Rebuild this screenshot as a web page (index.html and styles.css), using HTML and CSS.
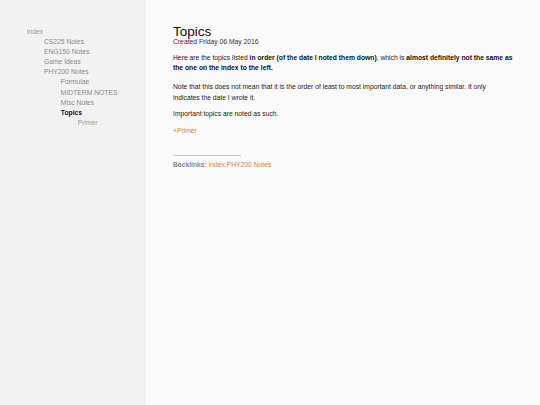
FILE: index.html
```html
<!DOCTYPE html>
<html>
<head>
<meta charset="utf-8">
<title>Topics</title>
<link rel="stylesheet" href="styles.css">
</head>
<body>
<div class="page">
  <nav class="sidebar">
    <ul class="tree">
      <li><a class="root" href="#">index</a>
        <ul>
          <li><a href="#">CS225 Notes</a></li>
          <li><a href="#">ENG150 Notes</a></li>
          <li><a href="#">Game Ideas</a></li>
          <li><a href="#">PHY200 Notes</a>
            <ul>
              <li><a href="#">Formulae</a></li>
              <li><a href="#">MIDTERM NOTES</a></li>
              <li><a href="#">Misc Notes</a></li>
              <li><span class="current">Topics</span>
                <ul>
                  <li><a class="leaf" href="#">Primer</a></li>
                </ul>
              </li>
            </ul>
          </li>
        </ul>
      </li>
    </ul>
  </nav>
  <main class="content">
    <h1 class="title">Topics</h1>
    <div class="created">Created Friday 06 May 2016</div>
    <p class="intro">Here are the topics listed <strong>in order (of the date I noted them down)</strong>, which is <strong>almost definitely not the same as the one on the index to the left.</strong></p>
    <p>Note that this does not mean that it is the order of least to most important data, or anything similar. It only indicates the date I wrote it.</p>
    <p>Important topics are noted as such.</p>
    <p><a class="link" href="#">+Primer</a></p>
    <hr class="rule">
    <div class="backlinks"><strong>Backlinks:</strong> <a class="link" href="#">index:PHY200 Notes</a></div>
  </main>
</div>
</body>
</html>
```

FILE: styles.css
```css
html, body {
  margin: 0;
  padding: 0;
  height: 100%;
}
body {
  font-family: "Liberation Sans", Arial, Helvetica, sans-serif;
  font-size: 6.75px;
  line-height: 10.1px;
  color: #222;
  background: #fafafa;
}
.page {
  display: flex;
  min-height: 405px;
}
.sidebar {
  width: 146px;
  flex: 0 0 146px;
  background: #f2f2f2;
  padding-top: 27px;
  box-sizing: border-box;
}
.tree, .tree ul {
  list-style: none;
  margin: 0;
  padding: 0;
}
.tree {
  padding-left: 27px;
}
.tree ul {
  padding-left: 16.9px;
}
.tree a {
  color: #8a8a8a;
  text-decoration: none;
}
.tree a.root {
  color: #9a9a9a;
}
.tree a.leaf {
  color: #a0a0a0;
}
.tree .current {
  color: #111;
  font-weight: bold;
}
.content {
  flex: 1;
  padding: 25.5px 0 0 27px;
}
.content p,
.content .created,
.content .backlinks,
.content .title {
  width: 341px;
}
.title {
  font-size: 13.5px;
  font-weight: normal;
  line-height: 12px;
  margin: 0;
  color: #111;
}
.created {
  font-size: 6.75px;
  line-height: 7px;
  color: #333;
}
.content p {
  margin: 6.75px 0;
}
.content p.intro {
  margin-top: 8.5px;
  margin-bottom: 9.25px;
}
.content strong {
  color: #111;
}
.link {
  color: #d5833c;
  text-decoration: none;
}
.rule {
  width: 68px;
  margin: 18.5px 0 0 0;
  border: 0;
  border-top: 1px solid #c8c8c8;
  height: 0;
}
.backlinks {
  margin-top: 4px;
  color: #888;
}
.backlinks strong {
  color: #888;
}
```
